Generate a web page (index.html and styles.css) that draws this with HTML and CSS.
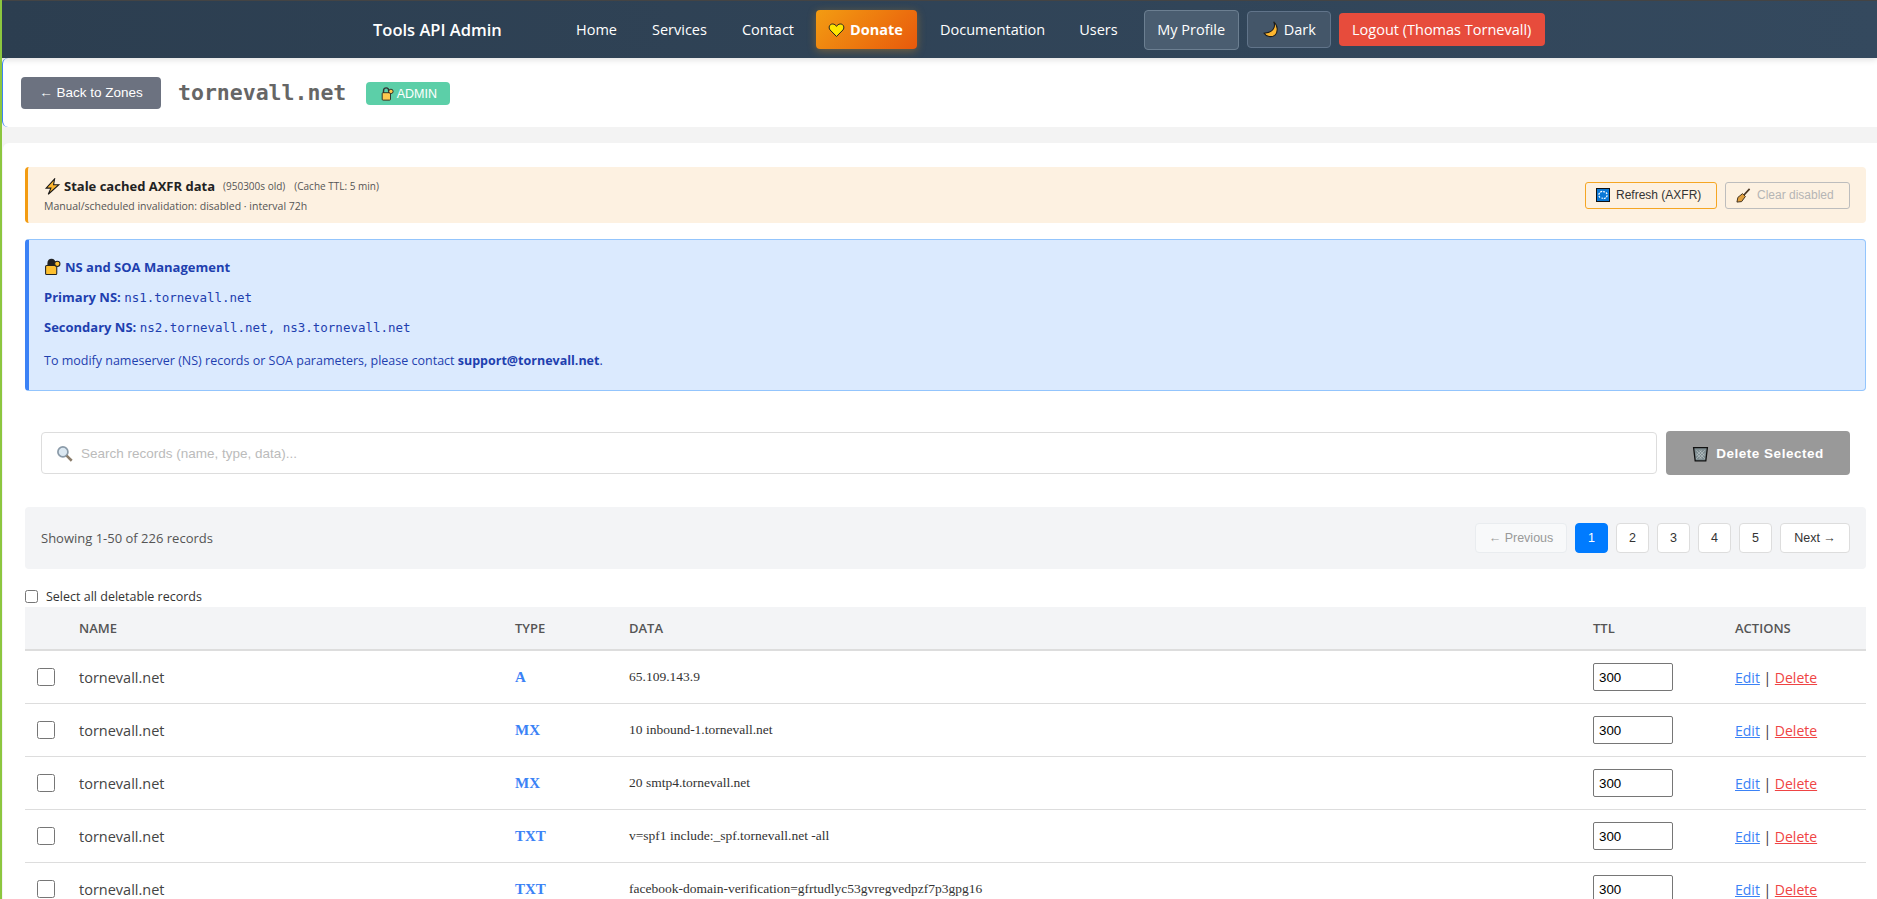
FILE: index.html
```html
<!DOCTYPE html>
<html lang="en">
<head>
    <meta charset="UTF-8">
    <meta name="viewport" content="width=device-width, initial-scale=1.0">
    <title>tornevall.net - Tools API Admin</title>
    <link rel="stylesheet" href="styles.css">
</head>
<body>

<nav class="navbar">
    <a class="brand" href="#">Tools API Admin</a>
    <a class="nav-link home" href="#">Home</a>
    <a class="nav-link" href="#">Services</a>
    <a class="nav-link" href="#">Contact</a>
    <a class="donate" href="#">
        <svg class="ico-heart" viewBox="0 0 16 16"><path d="M8 14.5 1.6 8C-.4 5.6 1 2 4 2c1.800 0 3.200 1 4 2.400C8.800 3 10.200 2 12 2c3 0 4.400 3.600 2.400 6z" fill="#ffe600" stroke="#222" stroke-width="1"/></svg>
        Donate
    </a>
    <a class="nav-link doc" href="#">Documentation</a>
    <a class="nav-link" href="#">Users</a>
    <a class="profile" href="#">My Profile</a>
    <a class="dark-toggle" href="#">
        <svg class="ico-moon" viewBox="0 0 16 16"><path d="M11 .8C13 5 11 11 2 11.500 4 15 9 15.600 12 13.500 15.500 10.500 15 4 11 .8z" fill="#fdb62f" stroke="#1a1a1a" stroke-width="1"/></svg>
        Dark
    </a>
    <a class="logout" href="#">Logout (Thomas Tornevall)</a>
</nav>

<header class="zone-header">
    <a class="back-btn" href="#">← Back to Zones</a>
    <h1 class="zone-name">tornevall.net</h1>
    <span class="admin-badge">
        <svg class="ico-lock" viewBox="0 0 16 16"><path d="M4 7V4.500C4 2 5.500 1 7 1s3 1 3 3.500V7" fill="none" stroke="#333" stroke-width="1.600"/><rect x="2.500" y="6.500" width="9.500" height="8.500" rx="1" fill="#fdc94f" stroke="#222"/><circle cx="12.500" cy="5" r="2.500" fill="#fdc94f" stroke="#222"/></svg>
        ADMIN
    </span>
</header>

<main class="card">
    <div class="stale-alert">
        <div class="stale-info">
            <div class="stale-title">
                <svg class="ico-bolt" viewBox="0 0 16 16"><path d="M10 .8 2 9.500h4.500L4 15.300l10-9H9z" fill="#fdb62f" stroke="#1a1a1a" stroke-width="1"/></svg>
                <strong>Stale cached AXFR data</strong>
                <small class="age">(950300s old)</small>
                <small>(Cache TTL: 5 min)</small>
            </div>
            <div class="stale-sub">Manual/scheduled invalidation: disabled · interval 72h</div>
        </div>
        <button class="btn-refresh" type="button">
            <svg class="ico-refresh" viewBox="0 0 14 14"><rect x=".5" y=".5" width="13" height="13" fill="#0a78d6" stroke="#111"/><path d="M4 9.500A3.500 3.500 0 0 1 7 3.500l2 .5M10 4.500A3.500 3.500 0 0 1 7 10.500L5.500 10" fill="none" stroke="#fff" stroke-width="1.200" stroke-dasharray="2 1"/></svg>
            Refresh (AXFR)
        </button>
        <button class="btn-clear" type="button" disabled>
            <svg class="ico-broom" viewBox="0 0 16 16"><path d="M14.500 1 8 8" stroke="#4a3520" stroke-width="1.800"/><path d="M7 6 10 9 6 14.500 1 15 2 10z" fill="#e0a040" stroke="#3a2a15" stroke-width="1"/></svg>
            Clear disabled
        </button>
    </div>

    <section class="ns-box">
        <div class="ns-title">
            <svg class="ico-lock-lg" viewBox="0 0 16 16"><path d="M4 7V4.500C4 2 5.500 1 7 1s3 1 3 3.500V7" fill="#222" stroke="#222" stroke-width="1.600"/><rect x="1.500" y="6.500" width="10.500" height="8.500" rx="1" fill="#fdc030" stroke="#222"/><circle cx="12.500" cy="5" r="2.500" fill="#fdc030" stroke="#222"/></svg>
            NS and SOA Management
        </div>
        <p class="ns-line"><strong>Primary NS:</strong> <code>ns1.tornevall.net</code></p>
        <p class="ns-line"><strong>Secondary NS:</strong> <code>ns2.tornevall.net, ns3.tornevall.net</code></p>
        <p class="ns-note">To modify nameserver (NS) records or SOA parameters, please contact <strong>support@tornevall.net</strong>.</p>
    </section>

    <div class="search-row">
        <div class="search-box">
            <svg class="ico-search" viewBox="0 0 16 16"><circle cx="6.500" cy="6.500" r="4.700" fill="#dbe8f2" stroke="#8a9aa8" stroke-width="1.600"/><path d="M10 10l4.800 4.800" stroke="#8b7d6b" stroke-width="2.400"/></svg>
            <input type="text" placeholder="Search records (name, type, data)...">
        </div>
        <button class="btn-delete" type="button">
            <svg class="ico-trash" viewBox="0 0 16 16"><path d="M1.500 2.500h13L13 15H3z" fill="#7e8c90" stroke="#111" stroke-width="1.200"/><path d="M4 5l8 8M7 5l5 5M4 8l5 5M12 5l-8 8M9 5l-5 5M12 8l-5 5" stroke="#c4ccce" stroke-width=".6"/></svg>
            Delete Selected
        </button>
    </div>

    <div class="pager-bar">
        <span class="pager-info">Showing 1-50 of 226 records</span>
        <div class="pager">
            <a class="page-btn wide disabled" href="#">← Previous</a>
            <a class="page-btn active" href="#">1</a>
            <a class="page-btn" href="#">2</a>
            <a class="page-btn" href="#">3</a>
            <a class="page-btn" href="#">4</a>
            <a class="page-btn" href="#">5</a>
            <a class="page-btn next" href="#">Next →</a>
        </div>
    </div>

    <label class="select-all"><input type="checkbox"> Select all deletable records</label>

    <table class="records">
        <thead>
            <tr>
                <th class="col-check"></th>
                <th class="col-name">NAME</th>
                <th class="col-type">TYPE</th>
                <th class="col-data">DATA</th>
                <th class="col-ttl">TTL</th>
                <th class="col-actions">ACTIONS</th>
            </tr>
        </thead>
        <tbody>
            <tr>
                <td><input class="row-check" type="checkbox"></td>
                <td class="name">tornevall.net</td>
                <td class="type">A</td>
                <td class="data">65.109.143.9</td>
                <td><input class="ttl" type="text" value="300"></td>
                <td class="actions"><a class="edit" href="#">Edit</a> | <a class="del" href="#">Delete</a></td>
            </tr>
            <tr>
                <td><input class="row-check" type="checkbox"></td>
                <td class="name">tornevall.net</td>
                <td class="type">MX</td>
                <td class="data">10 inbound-1.tornevall.net</td>
                <td><input class="ttl" type="text" value="300"></td>
                <td class="actions"><a class="edit" href="#">Edit</a> | <a class="del" href="#">Delete</a></td>
            </tr>
            <tr>
                <td><input class="row-check" type="checkbox"></td>
                <td class="name">tornevall.net</td>
                <td class="type">MX</td>
                <td class="data">20 smtp4.tornevall.net</td>
                <td><input class="ttl" type="text" value="300"></td>
                <td class="actions"><a class="edit" href="#">Edit</a> | <a class="del" href="#">Delete</a></td>
            </tr>
            <tr>
                <td><input class="row-check" type="checkbox"></td>
                <td class="name">tornevall.net</td>
                <td class="type">TXT</td>
                <td class="data">v=spf1 include:_spf.tornevall.net -all</td>
                <td><input class="ttl" type="text" value="300"></td>
                <td class="actions"><a class="edit" href="#">Edit</a> | <a class="del" href="#">Delete</a></td>
            </tr>
            <tr>
                <td><input class="row-check" type="checkbox"></td>
                <td class="name">tornevall.net</td>
                <td class="type">TXT</td>
                <td class="data">facebook-domain-verification=gfrtudlyc53gvregvedpzf7p3gpg16</td>
                <td><input class="ttl" type="text" value="300"></td>
                <td class="actions"><a class="edit" href="#">Edit</a> | <a class="del" href="#">Delete</a></td>
            </tr>
        </tbody>
    </table>
</main>

</body>
</html>
```
FILE: styles.css
```css
html, body {
    height: 100%;
    overflow: hidden;
}
body {
    margin: 0;
    border-left: 2px solid #8cc63f;
    background: #f3f3f3;
    color: #333;
    font-family: "Open Sans", "Noto Sans", sans-serif;
    font-size: 14px;
}
a {
    text-decoration: none;
}
svg {
    flex: none;
}

/* navbar */
.navbar {
    display: flex;
    align-items: center;
    height: 57px;
    padding-left: 371px;
    border-top: 1px solid #444;
    background: linear-gradient(90deg, #2c3e50, #34495e);
    box-shadow: 0 2px 6px rgba(0, 0, 0, 0.12);
    position: relative;
    font-size: 14.5px;
}
.brand {
    color: #fff;
    font-size: 16.5px;
    font-weight: 600;
    width: 203px;
}
.nav-link {
    color: #fff;
    margin-right: 35px;
}
.donate {
    display: flex;
    align-items: center;
    gap: 5px;
    height: 39px;
    padding: 0 12px;
    margin: 0 23px 0 -13px;
    box-sizing: border-box;
    width: 101px;
    border-radius: 4px;
    background: linear-gradient(135deg, #f39c12, #e8590c);
    box-shadow: 0 2px 8px rgba(243, 156, 18, 0.35);
    color: #fff;
    font-weight: 700;
}
.ico-heart {
    width: 17px;
    height: 16px;
}
.doc {
    margin-right: 34px;
}
.profile {
    display: flex;
    align-items: center;
    justify-content: center;
    box-sizing: border-box;
    width: 95px;
    height: 40px;
    margin: 0 8px 0 -9px;
    border: 1px solid #6c7f91;
    border-radius: 4px;
    background: #4a5d70;
    color: #fff;
}
.dark-toggle {
    display: flex;
    align-items: center;
    justify-content: center;
    gap: 5px;
    box-sizing: border-box;
    width: 84px;
    height: 37px;
    margin-right: 8px;
    border: 1px solid #61748a;
    border-radius: 4px;
    background: #445669;
    color: #fff;
}
.ico-moon {
    width: 17px;
    height: 17px;
}
.logout {
    display: flex;
    align-items: center;
    justify-content: center;
    width: 206px;
    height: 33px;
    border-radius: 4px;
    background: #e74c3c;
    color: #fff;
}

/* zone header */
.zone-header {
    display: flex;
    align-items: center;
    height: 69px;
    padding-left: 18px;
    border-left: 1px solid #3b82f6;
    border-radius: 6px 0 0 6px;
    background: #fff;
    margin-bottom: 16px;
}
.back-btn {
    display: flex;
    align-items: center;
    justify-content: center;
    width: 140px;
    height: 32px;
    margin-right: 17px;
    border-radius: 4px;
    background: #6c7280;
    color: #fff;
    font-family: "Liberation Sans", sans-serif;
    font-size: 13.5px;
}
.zone-name {
    margin: 0 20px 0 0;
    color: #666;
    font-family: "DejaVu Sans Mono", monospace;
    font-size: 21.500px;
    font-weight: 700;
}
.admin-badge {
    display: flex;
    align-items: center;
    justify-content: center;
    gap: 3px;
    width: 84px;
    height: 23px;
    margin-top: 2px;
    border-radius: 4px;
    background: #5ccfa8;
    color: #fff;
    font-family: "Liberation Sans", sans-serif;
    font-size: 12.500px;
}
.ico-lock {
    width: 14px;
    height: 14px;
}

/* main card */
.card {
    height: 800px;
    padding: 24px 11px 0 22px;
    margin-left: 1px;
    border-radius: 6px 0 0 0;
    background: #fff;
}

/* stale alert */
.stale-alert {
    display: flex;
    align-items: center;
    gap: 8px;
    box-sizing: border-box;
    height: 56px;
    padding: 0 16px 0 16px;
    border-left: 3px solid #f39c12;
    border-radius: 4px;
    background: #fdf1e1;
}
.stale-info {
    flex: 1;
}
.stale-title {
    display: flex;
    align-items: center;
    gap: 3px;
    font-size: 13px;
    color: #222;
}
.stale-title small {
    margin-left: 6px;
    font-size: 10px;
    color: #555;
}
.stale-title .age {
    margin-left: 5px;
}
.ico-bolt {
    width: 17px;
    height: 17px;
}
.stale-sub {
    margin-top: 4px;
    font-size: 10.500px;
    color: #555;
}
.btn-refresh, .btn-clear {
    display: flex;
    align-items: center;
    gap: 6px;
    height: 27px;
    padding: 0 10px;
    border-radius: 3px;
    background: transparent;
    font-family: "Liberation Sans", sans-serif;
    font-size: 12px;
    box-sizing: border-box;
}
.btn-refresh {
    width: 132px;
    border: 1px solid #f5a623;
    color: #333;
}
.btn-clear {
    width: 125px;
    border: 1px solid #bdbdbd;
    color: #b5b5b5;
}
.ico-refresh {
    width: 14px;
    height: 14px;
}
.ico-broom {
    width: 15px;
    height: 15px;
}

/* ns box */
.ns-box {
    box-sizing: border-box;
    height: 152px;
    margin-top: 16px;
    padding: 17px 14px 0 15px;
    border: 1px solid #93c5fd;
    border-left: 4px solid #3b82f6;
    border-radius: 4px;
    background: #dbeafe;
    color: #1e40af;
    font-size: 13px;
}
.ns-title {
    display: flex;
    align-items: center;
    gap: 4px;
    height: 20px;
    font-weight: 700;
}
.ico-lock-lg {
    width: 17px;
    height: 18px;
}
.ns-line {
    margin: 11px 0 0;
    height: 19px;
}
.ns-line code {
    font-family: "DejaVu Sans Mono", monospace;
    font-size: 12.500px;
}
.ns-note {
    margin: 15px 0 0;
    font-size: 12.500px;
}

/* search */
.search-row {
    display: flex;
    align-items: center;
    gap: 9px;
    margin-top: 40px;
    padding: 0 16px;
}
.search-box {
    flex: 1;
    display: flex;
    align-items: center;
    gap: 6px;
    box-sizing: border-box;
    height: 42px;
    padding: 0 14px;
    border: 1px solid #ddd;
    border-radius: 4px;
}
.ico-search {
    width: 17px;
    height: 17px;
}
.search-box input {
    flex: 1;
    border: none;
    outline: none;
    font-family: "Liberation Sans", sans-serif;
    font-size: 13.500px;
}
.search-box input::placeholder {
    color: #bbb;
}
.btn-delete {
    display: flex;
    align-items: center;
    justify-content: center;
    gap: 7px;
    width: 184px;
    height: 44px;
    border: none;
    border-radius: 4px;
    background: #999;
    color: #fff;
    font-family: "Liberation Sans", sans-serif;
    font-size: 13.500px;
    font-weight: 700;
    letter-spacing: 0.5px;
}
.ico-trash {
    width: 17px;
    height: 17px;
}

/* pagination */
.pager-bar {
    display: flex;
    align-items: center;
    justify-content: space-between;
    height: 62px;
    margin-top: 32px;
    padding: 0 16px;
    border-radius: 4px;
    background: #f3f4f6;
}
.pager-info {
    color: #555;
    font-size: 13px;
}
.pager {
    display: flex;
    gap: 8px;
}
.page-btn {
    display: flex;
    align-items: center;
    justify-content: center;
    box-sizing: border-box;
    width: 33px;
    height: 30px;
    border: 1px solid #ddd;
    border-radius: 4px;
    background: #fff;
    color: #333;
    font-family: "Liberation Sans", sans-serif;
    font-size: 12.500px;
}
.page-btn.wide {
    width: 92px;
}
.page-btn.next {
    width: 70px;
}
.page-btn.disabled {
    background: #f8f9fa;
    border-color: #e9ecef;
    color: #999;
}
.page-btn.active {
    border-color: #007bff;
    background: #007bff;
    color: #fff;
}

.select-all {
    display: flex;
    align-items: center;
    gap: 8px;
    height: 20px;
    margin-top: 17px;
    font-size: 12.500px;
}
.select-all input {
    width: 13px;
    height: 13px;
    margin: 0;
}

/* records */
.records {
    width: 100%;
    margin-top: 1px;
    border-collapse: collapse;
    table-layout: fixed;
}
.records th {
    height: 42px;
    padding: 0;
    border-bottom: 2px solid #ddd;
    background: #f3f4f6;
    color: #555;
    font-size: 13px;
    font-weight: 600;
    text-align: left;
}
.col-check { width: 54px; }
.col-name { width: 436px; }
.col-type { width: 114px; }
.col-data { width: 964px; }
.col-ttl { width: 142px; }
.records td {
    height: 52px;
    padding: 0;
    border-bottom: 1px solid #ddd;
}
.row-check {
    display: block;
    width: 18px;
    height: 18px;
    margin: 0 0 0 12px;
}
.name {
    color: #444;
    font-size: 14.500px;
    padding-top: 2px;
}
.records td.type {
    color: #3b82f6;
    font-family: "Liberation Serif", serif;
    font-size: 15px;
    font-weight: 700;
}
.records td.data {
    color: #333;
    font-family: "Liberation Serif", serif;
    font-size: 13.500px;
}
.ttl {
    display: block;
    box-sizing: border-box;
    width: 80px;
    height: 28px;
    padding: 0 5px;
    border: 1px solid #767676;
    border-radius: 2px;
    color: #000;
    font-family: "Liberation Sans", sans-serif;
    font-size: 13.300px;
}
.actions {
    padding-top: 2px;
    font-size: 14px;
}
.edit, .del {
    text-decoration: underline;
}
.edit { color: #3b82f6; }
.del { color: #ef4444; }
```
